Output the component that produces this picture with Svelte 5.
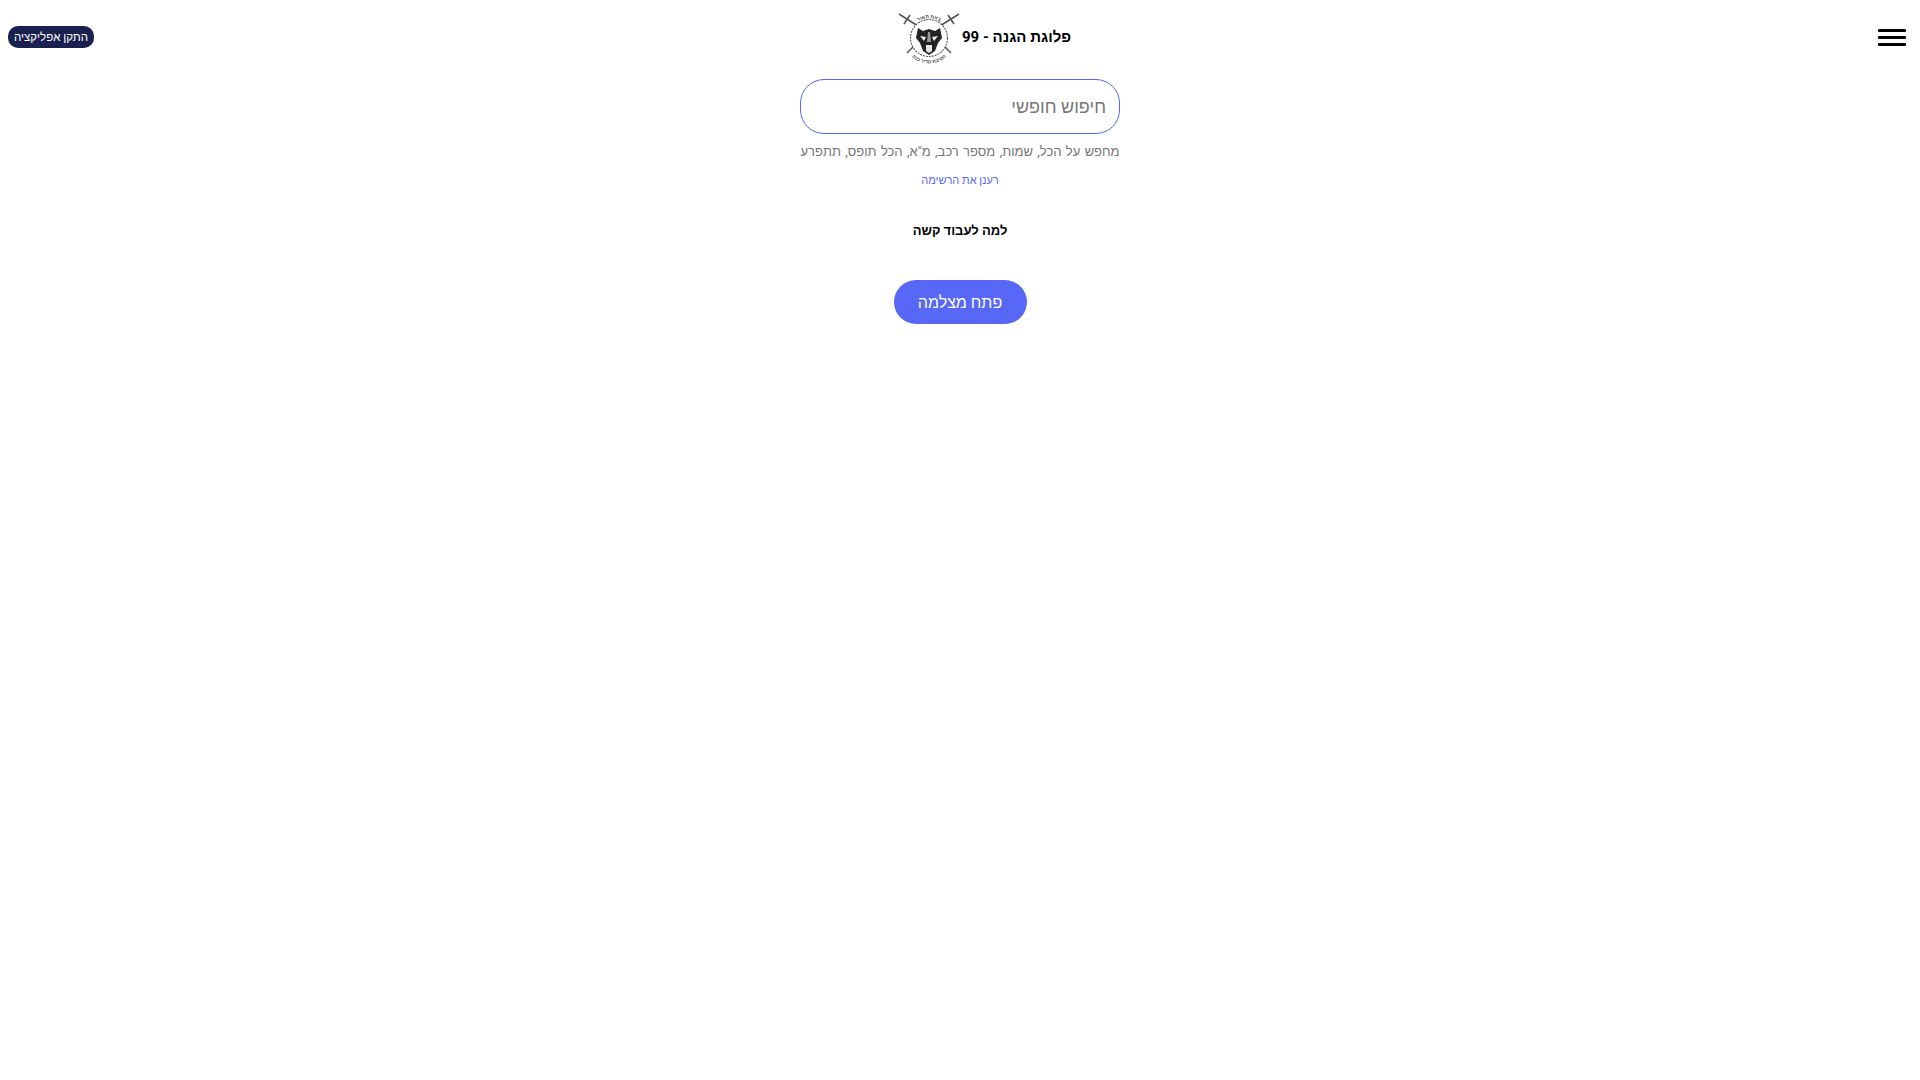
<script>
  let query = $state("");
</script>

<div class="page" dir="rtl">
  <header class="header">
    <button class="menu" aria-label="menu">
      <span></span><span></span><span></span>
    </button>

    <div class="brand">
      <h1>פלוגת הגנה - 99</h1>
      <svg class="logo" viewBox="0 0 64 58" aria-hidden="true">
        <defs>
          <path id="arcTop" d="M17 17 A20 20 0 0 1 47 17" />
          <path id="arcBottom" d="M12 46 A26 26 0 0 0 52 46" />
        </defs>
        <!-- swords -->
        <g stroke="#555" fill="none">
          <path d="M2 6 L21 18" stroke-width="1.6" />
          <path d="M62 6 L43 18" stroke-width="1.6" />
          <path d="M7 16 L13 7 M57 16 L51 7" stroke-width="1.6" />
          <path d="M17 38 L10 45 M47 38 L54 45" stroke-width="1.5" />
        </g>
        <circle cx="32" cy="30" r="18.5" fill="#fff" stroke="#555" stroke-width="1.1" stroke-dasharray="2 1" />
        <!-- wolf head -->
        <path d="M21 20 L26 23 L32 21 L38 23 L43 20 L45 30 L41 35 L38 43 L32 47 L26 43 L23 35 L19 30 Z" fill="#222" />
        <path d="M23 28 L29 29 L27 33 Z M41 28 L35 29 L37 33 Z" fill="#eee" />
        <path d="M29 37 L35 37 L35 43 L32 45 L29 43 Z" fill="#e4e4e4" />
        <path d="M31 24 L33 24 L34 34 L30 34 Z" fill="#999" />
        <text class="arc-text"><textPath href="#arcTop" startOffset="50%">בזות תאור</textPath></text>
        <text class="arc-text"><textPath href="#arcBottom" startOffset="50%">חטיבת סדיר ככה</textPath></text>
      </svg>
    </div>

    <button class="install">התקן אפליקציה</button>
  </header>

  <main class="content">
    <input class="search" type="text" placeholder="חיפוש חופשי" bind:value={query} />
    <p class="hint">מחפש על הכל, שמות, מספר רכב, מ"א, הכל תופס, תתפרע</p>
    <a class="refresh" href="#top">רענן את הרשימה</a>
    <h2>למה לעבוד קשה</h2>
    <button class="camera">פתח מצלמה</button>
  </main>
</div>

<style>
  :global(body) {
    margin: 0;
    background: #fff;
  }

  .page {
    font-family: Roboto, "Liberation Sans", sans-serif;
    min-height: 1080px;
    color: #000;
  }

  .header {
    display: flex;
    justify-content: space-between;
    align-items: center;
    height: 74px;
    padding: 0 14px 0 8px;
  }

  .menu {
    display: flex;
    flex-direction: column;
    align-items: flex-start;
    gap: 4px;
    width: 32px;
    padding: 0;
    border: none;
    background: none;
  }

  .menu span {
    width: 28px;
    height: 3px;
    background: #000;
    border-radius: 1px;
  }

  .brand {
    display: flex;
    align-items: center;
    gap: 1px;
  }

  h1 {
    margin: 0;
    font-size: 15px;
    font-weight: 700;
    white-space: nowrap;
  }

  .logo {
    width: 64px;
    height: 58px;
    display: block;
  }

  .arc-text {
    font-size: 5px;
    font-weight: 700;
    text-anchor: middle;
    fill: #444;
  }

  .install {
    height: 22px;
    padding: 0 6px;
    border: none;
    border-radius: 10px;
    background: #1a2050;
    color: #fff;
    font-size: 11.5px;
    font-family: inherit;
  }

  .content {
    display: flex;
    flex-direction: column;
    align-items: center;
    padding-top: 5px;
  }

  .search {
    box-sizing: border-box;
    width: 320px;
    height: 55px;
    padding: 0 13px;
    border: 1px solid #5668f5;
    border-radius: 24px;
    font-size: 18px;
    font-family: inherit;
    outline: none;
  }

  .search::placeholder {
    color: #777;
    opacity: 1;
  }

  .hint {
    margin: 10px 0 0;
    font-size: 13px;
    line-height: 16px;
    word-spacing: 1.1px;
    color: #757575;
  }

  .refresh {
    margin-top: 13px;
    font-size: 11px;
    line-height: 16px;
    color: #5668f5;
    text-decoration: none;
  }

  h2 {
    margin: 33px 0 0;
    font-size: 13px;
    line-height: 18px;
    font-weight: 700;
  }

  .camera {
    margin-top: 40px;
    width: 133px;
    height: 44px;
    border: none;
    border-radius: 22px;
    background: #5668f5;
    color: #fff;
    font-size: 16px;
    font-family: inherit;
  }
</style>
